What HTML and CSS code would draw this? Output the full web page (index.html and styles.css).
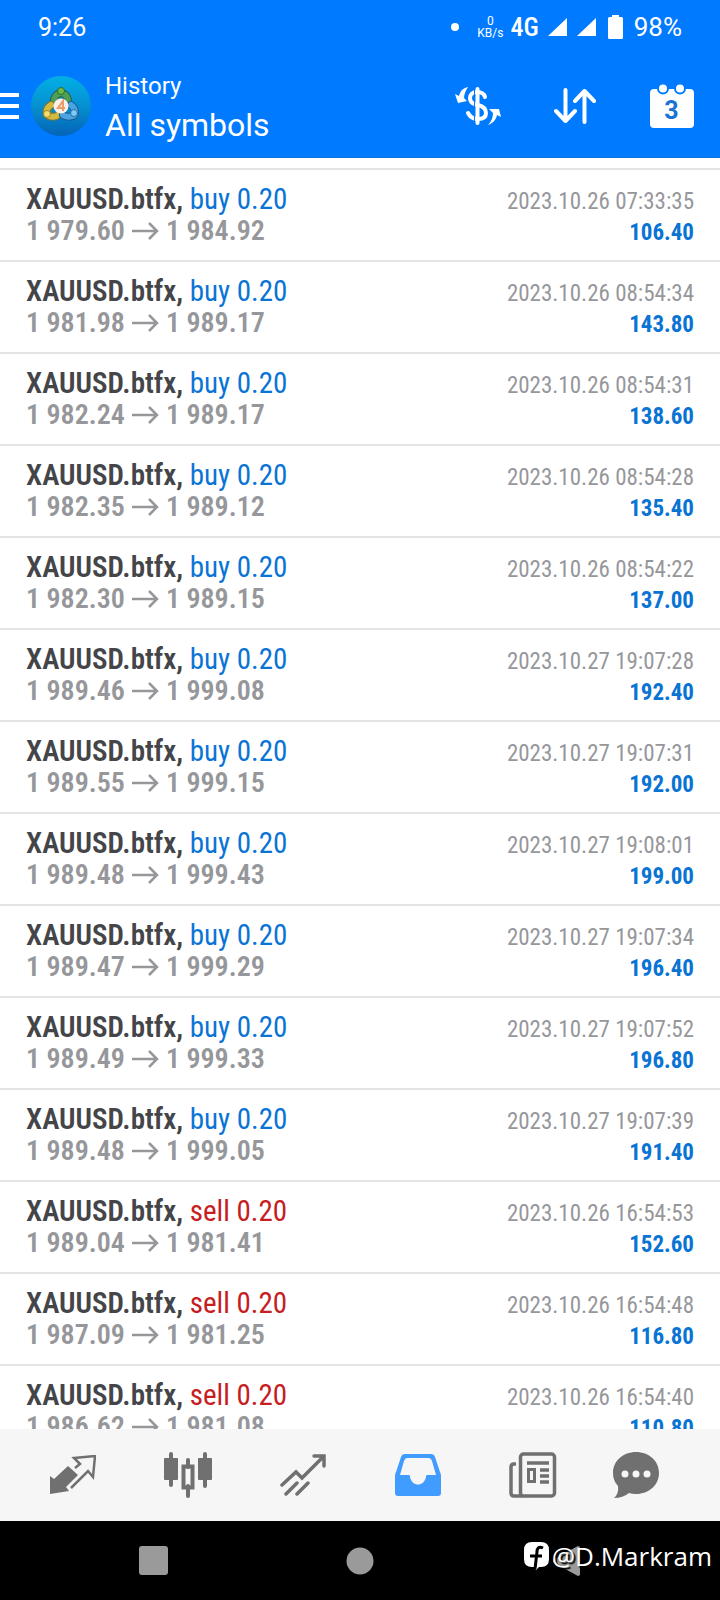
FILE: index.html
```html
<!DOCTYPE html>
<html lang="en">
<head>
<meta charset="utf-8">
<meta name="viewport" content="width=device-width, initial-scale=1">
<title>History</title>
<link rel="stylesheet" href="styles.css">
</head>
<body>
<header class="top">
  <div class="status">
    <span class="clock">9:26</span>
    <span class="dot"></span>
    <span class="rate"><span>0</span><span>KB/s</span></span>
    <span class="network">4G</span>
    <svg class="signal" width="48" height="18" viewBox="0 0 48 18"><path d="M0 18 19 0v18zM29 18 48 0v18z" fill="#fff"/></svg>
    <svg class="battery" width="15" height="24" viewBox="0 0 15 24"><path d="M4 0h7v2h2.500a1.500 1.500 0 0 1 1.500 1.500v19a1.500 1.500 0 0 1-1.500 1.500h-12A1.500 1.500 0 0 1 0 22.500v-19A1.500 1.500 0 0 1 1.500 2H4z" fill="#fff"/></svg>
    <span class="percent">98%</span>
  </div>
  <div class="appbar">
    <button class="menu" aria-label="Menu"><svg width="19" height="28" viewBox="0 0 19 28"><path d="M0 3h19M0 14h19M0 25h19" stroke="#fff" stroke-width="4"/></svg></button>
    <svg class="logo" width="60" height="60" viewBox="0 0 60 60">
      <defs><linearGradient id="sky" x1="0" y1="0" x2="0" y2="1"><stop offset="0" stop-color="#02b0e6"/><stop offset=".5" stop-color="#0590d0"/><stop offset="1" stop-color="#0564b8"/></linearGradient></defs>
      <circle cx="30" cy="30" r="30" fill="url(#sky)"/>
      <g stroke-linecap="round" fill="none">
        <path d="M23 27c-1-13 15-13 14 0" stroke="#245f4c" stroke-width="8"/>
        <path d="M23 27c-1-13 15-13 14 0" stroke="#4f9e55" stroke-width="6"/>
        <path d="M20 29c-5 3-6 9-2 11 3 1 7 1 9-1" stroke="#7a7433" stroke-width="8"/>
        <path d="M20 29c-5 3-6 9-2 11 3 1 7 1 9-1" stroke="#d4bb40" stroke-width="6"/>
        <path d="M40 29c5 4 5 9 2 11-3 1-8 1-10-1" stroke="#1a5c97" stroke-width="8"/>
        <path d="M40 29c5 4 5 9 2 11-3 1-8 1-10-1" stroke="#4ba3df" stroke-width="6"/>
      </g>
      <circle cx="30" cy="15" r="3.500" fill="#6dbb45" stroke="#276b35"/>
      <circle cx="16" cy="38" r="3.500" fill="#f7db6c" stroke="#9b8524"/>
      <circle cx="43" cy="37" r="3.500" fill="#7ccaf8" stroke="#286da5"/>
      <circle cx="30" cy="30" r="7.500" fill="#f8f0e9"/>
      <path d="M32 35v-10l-5 7h7" fill="none" stroke="#ee9a68" stroke-width="2"/>
    </svg>
    <h1 class="titles"><span class="section">History</span><span class="filter">All symbols</span></h1>
    <button class="action" aria-label="Currency"><svg width="46" height="38" viewBox="0 0 46 38">
      <path d="M22.500 2v34" stroke="#fff" stroke-width="4" stroke-linecap="round"/>
      <path d="M30 10c-1-4-4-5-8-5-5 0-7 3-7 6 0 5 4 6 8 7s8 3 8 8-4 6-8 6c-5 0-8-2-10-6" fill="none" stroke="#fff" stroke-width="4" stroke-linecap="round"/>
      <path d="M19.500 3v32" stroke="#007aff" stroke-width="1"/>
      <path d="M13 0C8 1 5 4 4 9L0 7l3 9 9-2-3-3c0-4 2-8 4-11zM33 38c5-2 8-5 9-10l4 2-2-8-10 0 4 4c0 5-2 9-5 12z" fill="#fff"/>
    </svg></button>
    <button class="action" aria-label="Sort"><svg width="42" height="36" viewBox="0 0 42 36"><path d="M11.500 2v31M2 23l9.500 10 9.500-10M30.500 34V3M21 13l9.500-10L40 13" fill="none" stroke="#fff" stroke-width="4" stroke-linecap="round" stroke-linejoin="round"/></svg></button>
    <button class="action calendar" aria-label="Calendar, 3"><svg width="44" height="44" viewBox="0 0 44 44"><rect y="5" width="44" height="39" rx="4" fill="#fff"/><g fill="#fff" stroke="#007aff" stroke-width="2"><circle cx="13" cy="4.500" r="5"/><circle cx="30" cy="4.500" r="5"/></g></svg><span class="day">3</span></button>
  </div>
</header>
<main class="history"><ul class="deals" id="deals"></ul></main>
<nav class="tabs">
  <button class="tab" aria-label="Quotes"><svg width="46" height="40" viewBox="0 0 46 40"><path d="M18 11l10 9-12 12 3 4-19 3V21l4 3z" fill="#707070"/><path d="M25 13l5-4-6-6 21-2-2 21-5-6-17 17" fill="none" stroke="#707070" stroke-width="2.500"/></svg></button>
  <button class="tab" aria-label="Charts"><svg width="48" height="46" viewBox="0 0 48 46"><path d="M7 2v31M41 2v32M24 8v7M24 34v10" stroke="#707070" stroke-width="4" stroke-linecap="round"/><rect y="6" width="14" height="22" rx="1" fill="#707070"/><rect x="34" y="6" width="14" height="22" rx="1" fill="#707070"/><rect x="19.500" y="14.500" width="9" height="21" fill="none" stroke="#707070" stroke-width="4"/></svg></button>
  <button class="tab" aria-label="Trade"><svg width="46" height="44" viewBox="0 0 46 44"><path d="M2 32l14-13 6 6L43 4M34 3h10v10M6 41l11-11M17 41l11-11" fill="none" stroke="#707070" stroke-width="3.500" stroke-linecap="round"/></svg></button>
  <button class="tab" aria-label="History" aria-current="page"><svg width="46" height="42" viewBox="0 0 46 42"><path fill-rule="evenodd" d="M10 0h26q3 0 4 3l5 15q1 2 1 4v17q0 3-3 3H3q-3 0-3-3V22q0-2 1-4L6 3q1-3 4-3zM12 4q-2 0-3 3L5 21h9c1 0 1 1 1 2 2 10 14 10 16 0 0-1 0-2 1-2h9L37 7q-1-3-3-3z" fill="#409cff"/></svg></button>
  <button class="tab" aria-label="News"><svg width="48" height="46" viewBox="0 0 48 46"><g fill="none" stroke="#707070" stroke-width="3.500"><rect x="11.500" y="2" width="34" height="42" rx="3"/><path d="M7 12H5q-3 0-3 3v26q0 3 3 3h9M18 11h22M31 18h9M31 24h9M31 30h9"/></g><path fill-rule="evenodd" d="M18 16h9v15h-9zM21 19v9h3v-9z" fill="#707070"/></svg></button>
  <button class="tab last" aria-label="Messages"><svg width="46" height="46" viewBox="0 0 46 46"><path d="M23 0c13 0 23 9 23 21S36 42 23 42q-4 0-7-1-6 5-15 5 5-4 4-12-5-5-5-13C0 9 10 0 23 0z" fill="#707070"/><g fill="#f6f6f6"><circle cx="12" cy="22" r="3.500"/><circle cx="23" cy="22" r="3.500"/><circle cx="34" cy="22" r="3.500"/></g></svg></button>
</nav>
<footer class="system">
  <button class="key" aria-label="Recent apps"><svg width="29" height="29" viewBox="0 0 29 29"><rect width="29" height="29" rx="3" fill="#9a9a9a"/></svg></button>
  <button class="key" aria-label="Home"><svg width="28" height="28" viewBox="0 0 28 28"><circle cx="14" cy="14" r="13.500" fill="#9a9a9a"/></svg></button>
  <button class="key" aria-label="Back"><svg width="28" height="30" viewBox="0 0 28 30"><path d="M1 13 25 0q2 0 2 2v26q0 2-2 2L1 17q-2-2 0-4z" fill="#9a9a9a"/></svg></button>
  <div class="credit"><svg width="25" height="28" viewBox="0 0 25 28"><path d="M8 0h9q8 0 8 8v9q0 8-8 8h-2l-3 3-1-3H8q-8 0-8-8V8q0-8 8-8z" fill="#fff"/><path d="M19 6c-4-2-6 0-6 4l-2 17M6 14h12" fill="none" stroke="#000" stroke-width="3"/></svg><span>@D.Markram</span></div>
</footer>
<script src="deals.js"></script>
</body>
</html>
```
FILE: styles.css
```css
* { box-sizing: border-box; }
body {
  margin: 0;
  height: 100vh;
  display: flex;
  flex-direction: column;
  overflow: hidden;
  background: #fff;
  font-family: Roboto, "Liberation Sans", sans-serif;
}
button {
  border: 0;
  padding: 0;
  background: none;
  font: inherit;
  color: inherit;
  display: flex;
  align-items: center;
  justify-content: center;
}
svg { display: block; flex: none; }
.top {
  flex: none;
  background: #007aff;
  color: #fff;
  border-bottom: 1px solid #0870d8;
}
.status {
  height: 54px;
  padding: 0 38px;
  display: flex;
  align-items: center;
  font-size: 25px;
}
.clock { margin-right: auto; }
.dot {
  width: 8px;
  height: 8px;
  margin-right: 18px;
  border-radius: 50%;
  background: #fff;
}
.rate {
  display: flex;
  flex-direction: column;
  align-items: center;
  margin-right: 7px;
  font-size: 12px;
  line-height: 12px;
}
.network {
  margin-right: 9px;
  font-family: "Roboto Condensed", "Liberation Sans Narrow", sans-serif;
  font-size: 26px;
  font-weight: 500;
}
.signal { margin-right: 12px; }
.battery { margin-right: 11px; }
.percent { font-size: 26px; }
.appbar {
  height: 103px;
  display: flex;
  align-items: center;
}
.menu { margin-right: 12px; }
.titles {
  margin: 0 auto 0 14px;
  font-weight: 400;
}
.titles span { display: block; }
.section { font-size: 24px; line-height: 38px; }
.filter { font-size: 32px; line-height: 40px; }
.action { width: 97px; height: 97px; }
.calendar { position: relative; }
.day {
  position: absolute;
  inset: 9px 0 0;
  display: flex;
  align-items: center;
  justify-content: center;
  color: #1a73d2;
  font-size: 25px;
  font-weight: 700;
}
.history {
  flex: 1;
  min-height: 0;
  overflow: hidden;
  padding-top: 10px;
}
.deals {
  margin: 0;
  padding: 0;
  list-style: none;
  font-family: "Roboto Condensed", "Liberation Sans Narrow", Roboto, sans-serif;
  border-top: 2px solid #e4e4e4;
}
.deal {
  padding: 13px 26px;
  border-bottom: 2px solid #e4e4e4;
}
.line {
  height: 32px;
  display: flex;
  align-items: baseline;
  justify-content: space-between;
  line-height: 32px;
  white-space: nowrap;
  font-size: 29px;
}
.symbol { color: #444549; font-weight: 600; }
.buy { color: #0a74d4; }
.sell { color: #c5201f; }
.prices {
  display: flex;
  align-items: baseline;
  gap: 7px;
  color: #96979b;
  font-size: 28px;
  font-weight: 600;
}
.time { color: #96979b; font-size: 23px; }
.profit { color: #0a74d4; font-size: 23px; font-weight: 700; }
.tabs {
  flex: none;
  height: 92px;
  padding: 0 38px 0 15px;
  display: flex;
  background: #f6f6f6;
}
.tab { flex: 115; }
.last { flex: 92; }
.system {
  flex: none;
  position: relative;
  height: 79px;
  padding: 0 50px;
  display: flex;
  background: #000;
}
.key { flex: 1; }
.credit {
  position: absolute;
  right: 8px;
  top: 16px;
  display: flex;
  align-items: center;
  gap: 3px;
  color: #fff;
  font-family: "Open Sans", sans-serif;
  font-size: 26px;
  line-height: 38px;
  text-shadow: 2px 2px 1px #000;
}
```
FILE: deals.js
```js
const deals = [
  ["buy", "1 979.60", "1 984.92", "2023.10.26 07:33:35", "106.40"],
  ["buy", "1 981.98", "1 989.17", "2023.10.26 08:54:34", "143.80"],
  ["buy", "1 982.24", "1 989.17", "2023.10.26 08:54:31", "138.60"],
  ["buy", "1 982.35", "1 989.12", "2023.10.26 08:54:28", "135.40"],
  ["buy", "1 982.30", "1 989.15", "2023.10.26 08:54:22", "137.00"],
  ["buy", "1 989.46", "1 999.08", "2023.10.27 19:07:28", "192.40"],
  ["buy", "1 989.55", "1 999.15", "2023.10.27 19:07:31", "192.00"],
  ["buy", "1 989.48", "1 999.43", "2023.10.27 19:08:01", "199.00"],
  ["buy", "1 989.47", "1 999.29", "2023.10.27 19:07:34", "196.40"],
  ["buy", "1 989.49", "1 999.33", "2023.10.27 19:07:52", "196.80"],
  ["buy", "1 989.48", "1 999.05", "2023.10.27 19:07:39", "191.40"],
  ["sell", "1 989.04", "1 981.41", "2023.10.26 16:54:53", "152.60"],
  ["sell", "1 987.09", "1 981.25", "2023.10.26 16:54:48", "116.80"],
  ["sell", "1 986.62", "1 981.08", "2023.10.26 16:54:40", "110.80"]
];
const arrow = '<svg width="27" height="18" viewBox="0 0 27 18"><path d="M0 9h25M17 1l8 8-8 8" fill="none" stroke="#96979b" stroke-width="2.500"/></svg>';
document.getElementById("deals").innerHTML = deals.map(([side, open, close, time, profit]) => `
<li class="deal">
  <div class="line"><span><span class="symbol">XAUUSD.btfx,</span> <span class="${side}">${side} 0.20</span></span><time class="time">${time}</time></div>
  <div class="line"><span class="prices"><span>${open}</span>${arrow}<span>${close}</span></span><span class="profit">${profit}</span></div>
</li>`).join("");
```
